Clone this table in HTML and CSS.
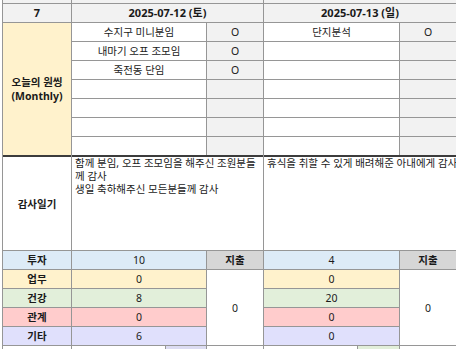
FILE: index.html
```html
<!DOCTYPE html>
<html lang="ko">
<head>
<meta charset="utf-8">
<title>7월 시트</title>
<link rel="stylesheet" href="styles.css">
</head>
<body>
<div class="sheet">
  <!-- partial row above -->
  <div class="c g"></div><div class="c g s2"></div><div class="c g s2"></div>

  <!-- header -->
  <div class="c g hd">7</div>
  <div class="c g hd s2">2025-07-12 (토)</div>
  <div class="c g hd s2">2025-07-13 (일)</div>

  <!-- one thing -->
  <div class="c y b r7 two">오늘의 원씽<br>(Monthly)</div>
  <div class="c">수지구 미니분임</div><div class="c g">O</div><div class="c">단지분석</div><div class="c g">O</div>
  <div class="c">내마기 오프 조모임</div><div class="c g">O</div><div class="c"></div><div class="c g"></div>
  <div class="c">죽전동 단임</div><div class="c g">O</div><div class="c"></div><div class="c g"></div>
  <div class="c"></div><div class="c g"></div><div class="c"></div><div class="c g"></div>
  <div class="c"></div><div class="c g"></div><div class="c"></div><div class="c g"></div>
  <div class="c"></div><div class="c g"></div><div class="c"></div><div class="c g"></div>
  <div class="c"></div><div class="c g"></div><div class="c"></div><div class="c g"></div>

  <!-- gratitude -->
  <div class="c b top">감사일기</div>
  <div class="c note top s2">함께 분임, 오프 조모임을 해주신 조원분들<br>께 감사<br>생일 축하해주신 모든분들께 감사</div>
  <div class="c note top s2">휴식을 취할 수 있게 배려해준 아내에게 감사</div>

  <!-- totals -->
  <div class="c blue b">투자</div><div class="c blue num">10</div><div class="c dg b">지출</div><div class="c blue num">4</div><div class="c dg b">지출</div>
  <div class="c yel b">업무</div><div class="c yel num">0</div><div class="c num r4">0</div><div class="c yel num">0</div><div class="c num r4">0</div>
  <div class="c grn b mark">건강</div><div class="c grn num">8</div><div class="c grn num">20</div>
  <div class="c pnk b">관계</div><div class="c pnk num">0</div><div class="c pnk num">0</div>
  <div class="c lav b">기타</div><div class="c lav num">6</div><div class="c lav num">0</div>

  <!-- partial row below -->
  <div class="c"></div>
  <div class="split"><span class="w"></span><span class="lavb"></span></div>
  <div class="c"></div>
  <div class="split"><span class="w"></span><span class="grnb"></span></div>
  <div class="c"></div>
</div>
</body>
</html>
```

FILE: styles.css
```css
html, body {
  margin: 0;
  padding: 0;
  background: #ffffff;
  overflow: hidden;
}

.sheet {
  display: grid;
  margin-left: 2px;
  border-left: 1px solid #969696;
  background: #969696;
  gap: 1px;
  grid-template-columns: 68px 134px 56px 135px 56px;
  grid-template-rows: 3px 18px repeat(7, 18px) 94px repeat(5, 18px) 18px;
  font-family: "Noto Sans", "Noto Sans CJK KR", sans-serif;
  font-size: 10.5px;
  color: #1a1a1a;
}

.c {
  display: flex;
  align-items: center;
  justify-content: center;
  background: #ffffff;
  white-space: nowrap;
  overflow: hidden;
  line-height: 14px;
  position: relative;
}

.s2 { grid-column: span 2; }
.r7 { grid-row: span 7; }
.r4 { grid-row: span 4; }

.g { background: #f2f2f2; }
.y { background: #fff2cc; }
.b { font-weight: 700; }
.hd { font-weight: 700; font-size: 11px; }

.two {
  text-align: center;
  line-height: 14.5px;
}

.top {
  border-top: 1px solid #3c3c3c;
  box-shadow: 0 -1px 0 #3c3c3c;
}

.note {
  display: block;
  padding: 0 2px 0 3px;
  line-height: 13px;
  text-align: left;
}

.num { font-size: 10.5px; }

.blue { background: #ddebf7; }
.yel { background: #fff2cc; }
.grn { background: #e2efda; }
.pnk { background: #ffcccc; }
.lav { background: #e0e0fc; }
.dg { background: #d6d6d6; }

.mark::before {
  content: "";
  position: absolute;
  left: -3px;
  top: 0;
  bottom: 0;
  width: 2px;
  background: #2f6b3c;
}

.split {
  display: flex;
  gap: 1px;
}
.split .w { flex: 1; background: #ffffff; }
.split .lavb { width: 40px; background: #dcdcf2; }
.split .grnb { width: 41px; background: #e2efda; }
```
